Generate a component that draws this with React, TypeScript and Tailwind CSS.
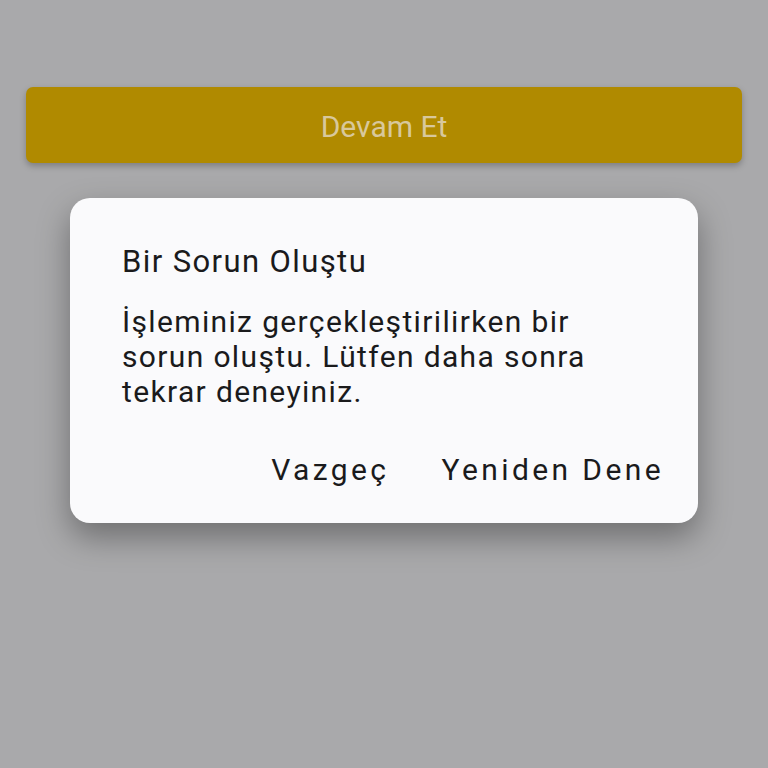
export default function App() {
  return (
    <div
      className="w-[768px] h-[768px] bg-[#a9a9ab] px-[26px] pt-[87px] flex flex-col"
      style={{ fontFamily: 'Roboto, "Noto Sans", sans-serif' }}
    >
      <button className="h-[76px] w-full rounded-[7px] bg-[#b08a00] shadow-[0_3px_6px_rgba(0,0,0,0.25)] flex items-center justify-center pt-[2px] text-[30px] text-[#d8c89c]">
        Devam Et
      </button>
      <div className="mt-[35px] mx-[44px] h-[325px] rounded-[20px] bg-[#fafafc] shadow-[0_14px_32px_rgba(0,0,0,0.35)] pl-[52px] pr-[35px] pt-[42px] flex flex-col">
        <div className="text-[31px] leading-[44px] tracking-[1.4px] text-[#1a1a1c]">Bir Sorun Oluştu</div>
        <div className="mt-[20px] text-[30px] leading-[35px] text-[#1a1a1c] tracking-[1.35px] w-[480px]">
          İşleminiz gerçekleştirilirken bir sorun oluştu. Lütfen daha sonra tekrar deneyiniz.
        </div>
        <div className="mt-[43px] flex justify-end gap-[52px] text-[30px] leading-[36px] tracking-[3.4px] text-[#1a1a1c]">
          <span>Vazgeç</span>
          <span className="mr-[-1px]">Yeniden Dene</span>
        </div>
      </div>
    </div>
  );
}
